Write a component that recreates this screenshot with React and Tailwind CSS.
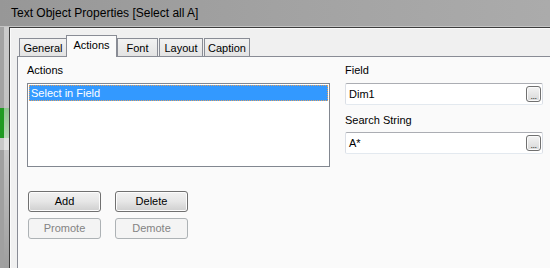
import React from 'react';

const tabs = [
  { label: 'General', w: 'w-[48px]', ml: '' },
  { label: 'Actions', w: 'w-[51px]', ml: '-ml-[1px]', active: true },
  { label: 'Font', w: 'w-[41px]', ml: '' },
  { label: 'Layout', w: 'w-[44px]', ml: 'ml-[1px]' },
  { label: 'Caption', w: 'w-[46px]', ml: 'ml-[1px]' },
];

const Tab = ({ label, w, ml, active }) => {
  if (active) {
    return (
      <div
        className={`${w} ${ml} relative z-10 h-[22px] -mb-[1px] border border-b-0 border-[#898c95] bg-[#fafafa] flex items-start justify-center pt-[3px] text-black`}
      >
        {label}
      </div>
    );
  }
  return (
    <div
      className={`${w} ${ml} h-[18px] border border-b-0 border-[#898c95] bg-linear-to-b from-[#f2f2f2] to-[#e3e3e3] flex items-center justify-center pt-[2px] text-black`}
    >
      {label}
    </div>
  );
};

const Button = ({ children, disabled }) => (
  <div
    className={
      disabled
        ? 'w-[73px] h-[21px] rounded-[3px] border border-[#adb2b5] bg-[#f4f4f4] flex items-center justify-center text-[#838383]'
        : 'w-[73px] h-[21px] rounded-[3px] border border-[#707070] bg-linear-to-b from-[#f2f2f2] via-[#e6e6e6] to-[#cfcfcf] flex items-center justify-center text-black shadow-[inset_0_0_0_1px_#fcfcfc]'
    }
  >
    {children}
  </div>
);

const BrowseInput = ({ value }) => (
  <div className="h-[22px] w-[198px] rounded-[2px] border border-[#dbdfe6] border-t-[#abadb3] border-b-[#e3e9ef] bg-white flex items-center pl-[3px] pr-[1px]">
    <span className="flex-1 text-black">{value}</span>
    <div className="w-[15px] h-[16px] rounded-[3px] border border-[#707070] bg-linear-to-b from-[#f4f4f4] to-[#d8d8d8] flex items-end justify-center pb-[1px] shadow-[inset_0_0_0_1px_#fafafa]">
      <span className="text-[9px] leading-[7px] tracking-[-0.5px] text-[#333]">...</span>
    </div>
  </div>
);

export default function App() {
  return (
    <div className="w-[550px] h-[268px] overflow-hidden bg-[#f0f0f0] font-['Liberation_Sans',Arial,sans-serif] text-[11px] leading-[13px] flex flex-col">
      {/* title bar */}
      <div className="h-[26px] shrink-0 bg-linear-to-r from-[#979797] via-[#a2a2a2] to-[#ababab] flex items-center pl-[11px] pt-[1px]">
        <span className="text-[12px] text-black">Text Object Properties [Select all A]</span>
      </div>

      <div className="flex flex-1">
        {/* window frame, left edge */}
        <div className="w-[9px] shrink-0 flex border-t border-[#c4c4c4]">
          <div className="w-[4px] flex flex-col">
            <div className="h-[81px] bg-[#a3a3a3]" />
            <div className="h-[30px] bg-[#1f9b22]" />
            <div className="h-[12px] bg-[#c9c9c9]" />
            <div className="flex-1 bg-[#a0a0a0]" />
          </div>
          <div className="w-[5px] flex flex-col">
            <div className="h-[81px] bg-linear-to-b from-[#cbcbcb] to-[#c2c2c2]" />
            <div className="h-[30px] bg-linear-to-b from-[#8ec58f] to-[#b8d8b8]" />
            <div className="h-[12px] bg-[#e2e2e2]" />
            <div className="flex-1 bg-linear-to-b from-[#c6c6c6] to-[#9e9e9e]" />
          </div>
        </div>

        {/* client area */}
        <div className="flex-1 flex flex-col border-t border-[#c4c4c4]">
          <div className="flex-1 flex flex-col border-t border-l border-[#3d3d3d] bg-[#f0f0f0] shadow-[inset_1px_1px_0_#fbfbfb] pt-[7px] pl-[7px]">
            {/* tab strip */}
            <div className="h-[21px] shrink-0 flex items-end pl-[2px]">
              {tabs.map((t) => (
                <Tab key={t.label} {...t} />
              ))}
            </div>

            {/* tab page */}
            <div className="flex-1 border-t border-l border-[#898c95] bg-[#fafafa] flex pl-[9px] pt-[7px]">
              {/* actions list */}
              <div className="w-[303px] flex flex-col">
                <span className="h-[13px] text-black">Actions</span>
                <div className="mt-[6px] h-[84px] border border-[#828790] bg-white p-[1px]">
                  <div className="h-[16px] bg-[#3399ff] text-white pl-[2px] flex items-center outline outline-1 outline-dotted outline-[#e0a060] -outline-offset-1">
                    Select in Field
                  </div>
                </div>

                <div className="mt-[24px] ml-[1px] flex gap-[14px]">
                  <Button>Add</Button>
                  <Button>Delete</Button>
                </div>
                <div className="mt-[6px] ml-[1px] flex gap-[14px]">
                  <Button disabled>Promote</Button>
                  <Button disabled>Demote</Button>
                </div>
              </div>

              {/* field settings */}
              <div className="ml-[15px] w-[198px] flex flex-col">
                <span className="h-[13px] text-black">Field</span>
                <div className="mt-[6px]">
                  <BrowseInput value="Dim1" />
                </div>
                <span className="mt-[9px] h-[13px] text-black">Search String</span>
                <div className="mt-[5px]">
                  <BrowseInput value="A*" />
                </div>
              </div>
            </div>
          </div>
        </div>
      </div>
    </div>
  );
}
